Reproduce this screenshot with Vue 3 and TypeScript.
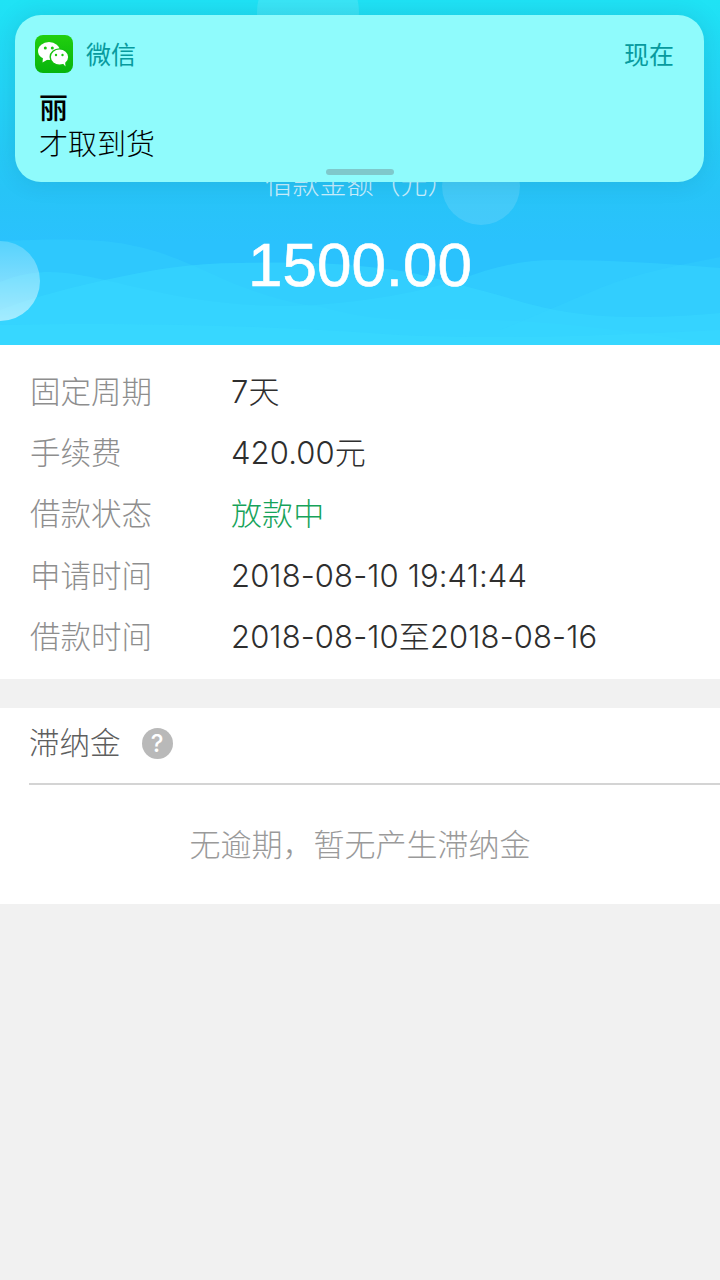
<script setup lang="ts">
interface Row {
  label: string
  value: string
  green?: boolean
}

const rows: Row[] = [
  { label: '固定周期', value: '7天' },
  { label: '手续费', value: '420.00元' },
  { label: '借款状态', value: '放款中', green: true },
  { label: '申请时间', value: '2018-08-10 19:41:44' },
  { label: '借款时间', value: '2018-08-10至2018-08-16' },
]
</script>

<template>
  <div class="page">
    <!-- 顶部金额 -->
    <header class="head">
      <svg class="waves" width="720" height="345" viewBox="0 0 720 345">
        <defs>
          <linearGradient id="ball" x1="0" y1="0" x2="0" y2="1">
            <stop offset="0" stop-color="#fff" stop-opacity="0.2" />
            <stop offset="1" stop-color="#fff" stop-opacity="0.55" />
          </linearGradient>
        </defs>
        <circle cx="308" cy="12" r="51" fill="#fff" fill-opacity="0.12" />
        <circle cx="481" cy="186" r="39" fill="#fff" fill-opacity="0.13" />
        <path d="M0 241C50 239 100 238 130 245C165 252 185 262 225 280C265 297 295 304 321 307C360 318 390 320 413 320C470 320 530 315 720 345H0Z" fill="#38d8ff" fill-opacity="0.3" />
        <path d="M0 282C20 274 35 272 50 272C85 272 130 288 183 297C225 304 255 306 284 306C330 306 400 298 459 280C490 268 520 260 555 260C610 260 660 263 720 268V345H0Z" fill="#38d8ff" fill-opacity="0.45" />
        <path d="M0 310C40 295 70 288 105 280C150 270 190 263 240 263C290 262 350 262 413 273C450 282 480 290 505 297C535 306 555 311 590 315C620 318 670 318 720 313V345H0Z" fill="#38d8ff" fill-opacity="0.55" />
        <path d="M0 345V325C120 322 260 325 400 335C500 340 620 335 720 330V345Z" fill="#38d8ff" fill-opacity="0.6" />
        <path d="M500 330C530 318 560 305 600 288C640 272 680 265 720 257V345H500Z" fill="#38d8ff" fill-opacity="0.25" />
        <circle cx="0" cy="281" r="40" fill="url(#ball)" />
      </svg>
      <div class="head-label">借款金额（元）</div>
      <div class="amount">1500.00</div>
    </header>

    <!-- 通知 -->
    <div class="notice">
      <div class="notice-top">
        <svg class="wx" width="38" height="38" viewBox="0 0 38 38">
          <defs>
            <linearGradient id="wxg" x1="0" y1="0" x2="0" y2="1">
              <stop offset="0" stop-color="#22cf0e" />
              <stop offset="1" stop-color="#07b40d" />
            </linearGradient>
          </defs>
          <rect width="38" height="38" rx="8" fill="url(#wxg)" />
          <ellipse cx="14" cy="16" rx="11" ry="9" fill="#fff" />
          <path d="M8 22L7.5 27.5L13.5 24Z" fill="#fff" />
          <ellipse cx="24.5" cy="22" rx="10" ry="8.8" fill="#14c00e" />
          <ellipse cx="24.5" cy="22" rx="8.6" ry="7.4" fill="#fff" />
          <path d="M27.5 28L30.5 31.5L30 26Z" fill="#fff" />
          <circle cx="10.3" cy="13" r="1.5" fill="#1cc80e" />
          <circle cx="17.3" cy="13" r="1.5" fill="#1cc80e" />
          <circle cx="21" cy="20" r="1.2" fill="#1cc80e" />
          <circle cx="27.5" cy="20" r="1.2" fill="#1cc80e" />
        </svg>
        <span class="app">微信</span>
        <span class="now">现在</span>
      </div>
      <div class="sender">丽</div>
      <div class="msg">才取到货</div>
      <div class="grip"></div>
    </div>

    <!-- 借款信息 -->
    <section class="info">
      <div v-for="row in rows" :key="row.label" class="row">
        <span class="label">{{ row.label }}</span>
        <span class="value" :class="{ green: row.green }">{{ row.value }}</span>
      </div>
    </section>

    <!-- 滞纳金 -->
    <section class="late">
      <div class="late-title">
        <span>滞纳金</span>
        <span class="q">?</span>
      </div>
      <div class="late-empty">无逾期，暂无产生滞纳金</div>
    </section>
  </div>
</template>

<style>
html,
body {
  background: #f1f1f1;
}
</style>

<style scoped>
.page {
  position: relative;
  width: 720px;
  height: 1280px;
  overflow: hidden;
  background: #f1f1f1;
  font-family: Inter, "Noto Sans CJK SC", sans-serif;
  font-weight: 300;
}

.head {
  position: relative;
  height: 345px;
  background: linear-gradient(180deg, #1fe3f5 0%, #27c4f7 55%, #2ac2fd 70%, #2ac2fd 100%);
  color: #fff;
  text-align: center;
  overflow: hidden;
}

.waves {
  position: absolute;
  left: 0;
  top: 0;
}

.head-label {
  position: relative;
  padding-top: 166px;
  font-size: 27px;
  line-height: 38px;
  opacity: 0.75;
}

.amount {
  position: relative;
  margin-top: 26px;
  font-family: "Liberation Sans", sans-serif;
  font-size: 62px;
  line-height: 70px;
  font-weight: 400;
  -webkit-text-stroke: 0.6px #fff;
}

.notice {
  position: absolute;
  left: 15px;
  top: 15px;
  width: 689px;
  height: 167px;
  box-sizing: border-box;
  padding: 20px 30px 0 20px;
  border-radius: 26px;
  background: #8ffbfc;
  box-shadow: 0 0 24px rgba(0, 40, 70, 0.12);
}

.notice-top {
  display: flex;
  align-items: center;
  height: 38px;
}

.app {
  margin: 1px 0 0 13px;
  font-size: 25px;
  font-weight: 400;
  line-height: 36px;
  color: #079a9e;
}

.now {
  margin: 1px 0 0 auto;
  font-size: 25px;
  font-weight: 400;
  line-height: 36px;
  color: #079a9e;
}

.sender {
  margin: 18px 0 0 4px;
  font-size: 29px;
  line-height: 36px;
  font-weight: 500;
  color: #000;
}

.msg {
  margin-left: 4px;
  font-size: 29px;
  line-height: 36px;
  color: #000;
}

.grip {
  position: absolute;
  left: 311px;
  bottom: 7px;
  width: 68px;
  height: 6px;
  border-radius: 3px;
  background: #7fc8cb;
}

.info {
  background: #fff;
  padding: 16px 0 11px;
}

.row {
  display: flex;
  align-items: center;
  height: 61.4px;
  padding-left: 30px;
  line-height: 40px;
}

.label {
  width: 201px;
  font-size: 30.5px;
  color: #8e8e8e;
}

.value {
  font-size: 31px;
  letter-spacing: 0.1px;
  color: #2e2e2e;
}

.green {
  color: #16a35a;
}

.late {
  margin-top: 29px;
  background: #fff;
  height: 196px;
}

.late-title {
  display: flex;
  align-items: center;
  gap: 21px;
  height: 71px;
  padding-bottom: 4px;
  margin-left: 29px;
  border-bottom: 2px solid #d4d4d4;
  font-size: 30.5px;
  line-height: 40px;
  color: #5e5e5e;
}

.q {
  width: 31px;
  height: 31px;
  border-radius: 50%;
  background: #b9b9b9;
  color: #fff;
  font-size: 24px;
  font-weight: 500;
  line-height: 31px;
  text-align: center;
}

.late-empty {
  margin-top: 40px;
  font-size: 31px;
  line-height: 40px;
  color: #9a9a9a;
  text-align: center;
}
</style>
